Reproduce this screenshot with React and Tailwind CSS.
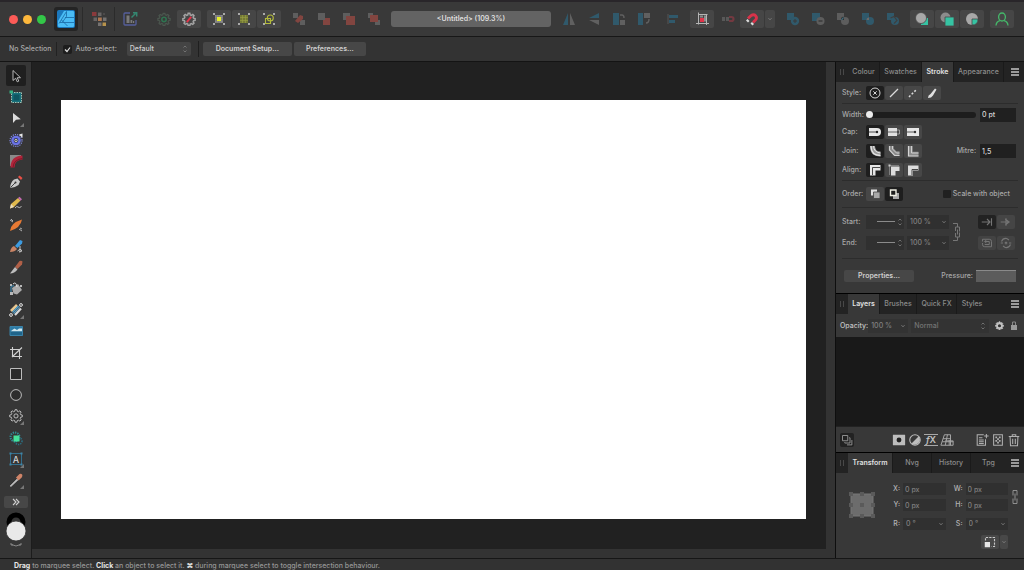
import React, { useState } from "react";

const Svg = ({ children, className = "size-4", box = "0 0 16 16" }) => (
  <svg viewBox={box} className={`shrink-0 ${className}`} fill="none" aria-hidden="true">
    {children}
  </svg>
);

const GEAR =
  "M7 1.5h2l.4 1.8 1.3.5 1.6-1 1.4 1.4-1 1.6.5 1.3 1.8.4v2l-1.8.4-.5 1.3 1 1.6-1.4 1.4-1.6-1-1.3.5L9 15.5H7l-.4-1.8-1.3-.5-1.6 1-1.4-1.4 1-1.6-.5-1.3L1 9.5v-2l1.8-.4.5-1.3-1-1.6 1.4-1.4 1.6 1 1.3-.5z";

const Corners = () => (
  <path d="M2 2h2v2H2zM12 2h2v2h-2zM2 12h2v2H2zM12 12h2v2h-2z" fill="#aaa" />
);

const Dots = ({ fill }) => (
  <g fill={fill}>
    {[4.2, 6.2, 8.2, 10.2].map((y) =>
      [4.2, 6.2, 8.2, 10.2].map((x) => <rect key={`${x}-${y}`} x={x} y={y} width="1.5" height="1.5" />)
    )}
  </g>
);

/* ---------- toolbar icons ---------- */

const DesignerLogo = () => (
  <Svg className="size-[18px]" box="0 0 18 18">
    <rect width="18" height="18" rx="2" fill="#1b78bd" />
    <path d="M7 1h9q1 0 1 1v14q0 1-1 1H2q-1 0-1-1v-5z" fill="#4abcf5" />
    <path d="M9.500 1.500L2 13.500M9.500 1.500v5L5.500 12M4.500 10l6 6M3 12.500h14M8 7.500h9" stroke="#1867a3" strokeWidth=".8" />
  </Svg>
);

const PixelPersona = () => (
  <Svg>
    <path d="M1 1h4.500v4H1z" fill="#8a3a3c" />
    <path d="M7 1.500h3.500V5H7z" fill="#686565" />
    <path d="M2.500 6.500H6V10H2.500z" fill="#686565" />
    <path d="M7 6.500h3.800V10H7z" fill="#ad7650" />
    <path d="M12 6.500h3.500V10H12z" fill="#757271" />
    <path d="M7 11.500h3.500V15H7z" fill="#757271" />
    <path d="M11.500 11.500h3.500V15h-3.500z" fill="#b8934c" />
    <path d="M12 2h2v2h-2z" fill="#4c4a4a" />
  </Svg>
);

const ExportPersona = () => (
  <Svg>
    <path d="M8 2H3q-1 0-1 1v10q0 1 1 1h10q1 0 1-1V9" stroke="#555f9c" strokeWidth="1.300" />
    <path d="M4.500 4.500h3v7.500h-3zM8.500 9h1.800v3H8.500zM11 10h1.200v2H11z" fill="#7a7a7a" />
    <path d="M9.500 6.500l4-4M11 1.800h3.700v3.700" stroke="#348670" strokeWidth="1.500" />
  </Svg>
);

const GearGreen = () => (
  <Svg className="size-3.5">
    <path d={GEAR} stroke="#4b564e" strokeWidth="1.400" />
    <circle cx="8" cy="8.500" r="2.500" stroke="#2f7350" strokeWidth="1.800" />
  </Svg>
);

const GearRed = () => (
  <Svg className="size-3.5">
    <path d={GEAR} stroke="#a3a3a3" strokeWidth="1.700" />
    <path d="M5.500 11.500l5-6" stroke="#e2344a" strokeWidth="2.200" />
  </Svg>
);

const SnapGrid = () => (
  <Svg>
    <Corners />
    <Dots fill="#b3b3b3" />
    <path d="M6 6h4v4H6z" fill="#e6f02a" />
  </Svg>
);

const SnapGridDim = () => (
  <Svg>
    <Corners />
    <path d="M4 4h8v8H4z" fill="#747a35" />
    <path d="M4 6.500h8M4 9.500h8M6.500 4v8M9.500 4v8" stroke="#9ba145" strokeWidth=".6" />
  </Svg>
);

const SnapShapes = () => (
  <Svg>
    <Corners />
    <path d="M4.500 7.500h5v5h-5z" stroke="#b3ba3b" strokeWidth="1.100" />
    <circle cx="9.300" cy="7" r="3" stroke="#b3ba3b" strokeWidth="1.100" />
  </Svg>
);

const Order = ({ kind }) => (
  <Svg>
    {kind === 0 && (
      <>
        <path d="M2 2h5v5H2zM9 9h5v5H9z" fill="#5e5e5e" />
        <path d="M4 10l5-6 3 1v3l-5 4z" fill="#824540" />
      </>
    )}
    {kind === 1 && (
      <>
        <path d="M7 7h7v7H7z" fill="#824540" />
        <path d="M2 2h7v7H2z" fill="#5e5e5e" />
      </>
    )}
    {kind === 2 && (
      <>
        <path d="M2 2h7v7H2z" fill="#5e5e5e" />
        <path d="M5 5h9v9H5z" fill="#824540" />
      </>
    )}
    {kind === 3 && (
      <>
        <path d="M2 2h5v5H2zM9 9h5v5H9z" fill="#5e5e5e" />
        <path d="M4 4h8v7H4z" fill="#824540" />
      </>
    )}
  </Svg>
);

const Flip = ({ kind }) => (
  <Svg>
    {kind === 0 && (
      <>
        <path d="M7 2v12H2z" fill="#30596b" />
        <path d="M9 2v12h5z" fill="#606060" />
      </>
    )}
    {kind === 1 && (
      <>
        <path d="M13 2v5H3z" fill="#30596b" />
        <path d="M13 14V9H3z" fill="#606060" />
      </>
    )}
    {kind === 2 && (
      <>
        <path d="M2 2h6v12H2z" fill="#30596b" />
        <path d="M9 9h5v5H9z" fill="#606060" />
        <path d="M9 4h2q2 0 2 3" stroke="#606060" strokeWidth="1.400" />
      </>
    )}
    {kind === 3 && (
      <>
        <path d="M2 2h5v12H2z" fill="#30596b" />
        <path d="M8 2h6v5H8z" fill="#606060" />
        <path d="M13 8q0 4-3 4" stroke="#606060" strokeWidth="1.400" />
      </>
    )}
  </Svg>
);

const AlignLeft = () => (
  <Svg>
    <path d="M3 3v10" stroke="#565656" />
    <path d="M4 4h9v3H4zM4 9h6v3H4z" fill="#30596b" />
  </Svg>
);

const PixelAlign = () => (
  <Svg>
    <path d="M4.500 1.500v12M2 12.500h13M4.500 3.500h9M12.500 3v11" stroke="#b5b5b5" />
    <path d="M6 4.500h3v2H6zM10 4.500h2v6h-2z" fill="#8d8d8d" />
    <path d="M6 7h4v4H6z" fill="#e2344a" />
  </Svg>
);

const MovePixels = () => (
  <Svg>
    <path d="M2 6h3v4H2zM6 6h3v4H6z" fill="#585858" />
    <path d="M9 6h2.500q2 0 2 2t-2 2H9" stroke="#733940" strokeWidth="2.200" />
  </Svg>
);

const Magnet = () => (
  <Svg>
    <path d="M4 7.500L7 4.700q2.700-2 4.600 0t-.2 4.400L9 11.500" stroke="#d8334a" strokeWidth="2.800" />
    <path d="M2 9.500l1.500-1.500L5.500 10l-1.500 1.500zM6.500 12.500L8 11l2 2-1.500 1.500z" fill="#ddd" />
  </Svg>
);

const Boolean = ({ kind }) => (
  <Svg>
    {kind === 0 && (
      <>
        <path d="M2 2h7v7H2z" fill="#30596b" />
        <circle cx="10" cy="10" r="4.200" fill="#30596b" />
        <path d="M8 10h4M10 8v4" stroke="#3b3b3b" />
      </>
    )}
    {kind === 1 && (
      <>
        <path d="M2 2h8v8H2z" fill="#30596b" />
        <circle cx="10.500" cy="10" r="4" fill="#5d5d5d" />
        <path d="M8.500 10h4" stroke="#333" strokeWidth="1.200" />
      </>
    )}
    {kind === 2 && (
      <>
        <path d="M2 2h7v7H2z" fill="#5d5d5d" />
        <circle cx="10" cy="10" r="4" fill="#5d5d5d" />
        <path d="M6 9q0-4 3-3v3z" fill="#303030" />
        <path d="M6.500 9l2-2.500" stroke="#40758a" strokeWidth="1.200" />
      </>
    )}
    {kind === 3 && (
      <>
        <path d="M2 2h7v7H2z" fill="#30596b" />
        <circle cx="10" cy="10" r="4" fill="#30596b" />
        <path d="M6.500 9q0-3 2.500-2.500V9z" fill="#6f6a68" />
      </>
    )}
    {kind === 4 && (
      <>
        <path d="M2 2h7v7H2z" fill="#30596b" />
        <circle cx="10" cy="10" r="4" fill="#30596b" />
        <path d="M5.500 7L9 5.500l3 4L9 12.500" stroke="#3f3f3f" strokeWidth="1.200" />
      </>
    )}
  </Svg>
);

const Insert = ({ kind }) => (
  <Svg>
    {kind === 0 && (
      <>
        <path d="M7 7h7v7H7z" fill="#36c3a3" />
        <circle cx="7" cy="7" r="5.500" fill="#a8a8a8" stroke="#484848" strokeWidth=".8" />
      </>
    )}
    {kind === 1 && (
      <>
        <circle cx="6.500" cy="6.500" r="5" fill="#8c8c8c" />
        <path d="M6 6h9v9H6z" fill="#36c3a3" stroke="#484848" strokeWidth=".8" />
      </>
    )}
    {kind === 2 && (
      <>
        <circle cx="8" cy="8" r="6" fill="#a8a8a8" />
        <path d="M8 8h6q0 6-6 6z" fill="#36c3a3" stroke="#484848" strokeWidth=".8" />
      </>
    )}
  </Svg>
);

const User = () => (
  <Svg>
    <ellipse cx="8" cy="6" rx="3.400" ry="4" stroke="#45b96a" strokeWidth="1.300" />
    <path d="M2 14.500q.4-4 4-4.800M14 14.500q-.4-4-4-4.800" stroke="#45b96a" strokeWidth="1.300" />
  </Svg>
);

/* ---------- tools ---------- */

const tools = [
  { name: "Move", draw: <path d="M5 2.500v10l2.700-2.300 1.500 3.600 1.600-.7-1.600-3.400H12.500z" fill="#111" stroke="#c8c8c8" strokeWidth=".9" /> },
  {
    name: "Artboard",
    draw: (
      <>
        <path d="M3.500 3.500h10v10h-10z" fill="#17717c" stroke="#a3c2b4" strokeWidth="1" strokeDasharray="1.500 1" />
        <path d="M5.500 5.500h6v6h-6z" fill="#0e5661" />
        <path d="M1.500 1.500H5v3H1.500z" fill="#36b082" />
      </>
    ),
  },
  { name: "Node", more: true, draw: <path d="M5 3v10l3-3.200 4.800-.6z" fill="#dcdcdc" /> },
  {
    name: "Contour",
    draw: (
      <>
        <circle cx="8" cy="8.500" r="6" stroke="#8088dc" strokeWidth="1.200" strokeDasharray="1.200 1" />
        <circle cx="8" cy="8.500" r="3.600" fill="#2f3568" stroke="#6a73e6" strokeWidth="2.400" />
        <circle cx="8" cy="8.500" r="1.200" stroke="#e0dca8" strokeWidth=".9" />
        <path d="M14.500 1.500v4.500l-3.500-3.500z" fill="#e8e8e8" />
      </>
    ),
  },
  {
    name: "Corner",
    draw: (
      <>
        <path d="M2 2h11v2Q4 4 4 13H2z" fill="#8a8a8a" />
        <path d="M4.500 14.500Q4.500 5 14.500 4.500" stroke="#b0243a" strokeWidth="4" />
        <path d="M5 14.500Q5.500 6.500 14.500 5.500" stroke="#6f1525" strokeWidth=".8" />
      </>
    ),
  },
  {
    name: "Pen",
    draw: (
      <>
        <path d="M2 14q.5-6 4-8.500l3.500-1 2.500 3-1.500 3.500Q7.500 13.500 2 14z" fill="#c9c9c9" />
        <path d="M2.500 13.500L7 9" stroke="#333" strokeWidth=".9" />
        <circle cx="7.500" cy="8.500" r="1" fill="#333" />
        <path d="M10 3l1.500-1.500 3 2.500-1.500 2z" fill="#ea4f45" />
      </>
    ),
  },
  {
    name: "Pencil",
    draw: (
      <>
        <path d="M3 9l7-6 2.500 2.500-6.500 6.500L2 13.500z" fill="#dfb94d" />
        <path d="M3 9l3 3-4 1.500z" fill="#e9dcc0" />
        <path d="M10 3l1.500-1.300 2.500 2.500-1.500 1.500z" fill="#c36bb0" />
        <path d="M7 13q2-2.500 3-1t3.500-.5" stroke="#c9c9c9" strokeWidth=".9" />
      </>
    ),
  },
  {
    name: "Vector Brush",
    draw: (
      <>
        <path d="M2 3l3 2M3 2l2 2M11 12l3 2M12 11l2 1" stroke="#bdbdbd" strokeWidth=".9" />
        <path d="M2 14Q2.500 6 14 2.500 12.500 11 2 14z" fill="#e77a34" />
      </>
    ),
  },
  {
    name: "Paint Brush",
    draw: (
      <>
        <path d="M7 8l5-6 2.500 1-.5 2.500L9.500 10z" fill="#3c9be0" />
        <path d="M2 14q1-5 4-6l3 3q-2 3-7 3z" fill="#c98465" />
        <path d="M12 8v6M9.500 13q3-3 4-1t-2.500 2" stroke="#c4c4c4" strokeWidth="1" />
      </>
    ),
  },
  {
    name: "Knife",
    draw: (
      <>
        <path d="M7 8l4.500-6q2-.8 3 .5l-.5 3L9.500 10z" fill="#b06048" />
        <path d="M2 14.500L7 8l2.500 2.500q-3 4-7.500 4z" fill="#bdbdbd" />
      </>
    ),
  },
  {
    name: "Fill",
    draw: (
      <>
        <path d="M4 7l6-4 4 6-5 4.500-3.500-1z" fill="#ababab" />
        <path d="M5 3q3-3 4 3" stroke="#e0e0e0" />
        <path d="M3 12V6.500q0-2 3-1.500" stroke="#3c7fa3" strokeWidth="1.300" />
        <path d="M2 3h2v2H2zM2 11h3v3H2zM12 4h2v2h-2z" fill="#b8b8b8" />
      </>
    ),
  },
  {
    name: "Stock",
    more: true,
    draw: (
      <>
        <path d="M3 9l6-6" stroke="#e8c68f" strokeWidth="2.600" />
        <path d="M5 11l6-6.500" stroke="#4c9fce" strokeWidth="2.600" />
        <path d="M7 13l6-6.500" stroke="#d9d9d9" strokeWidth="2.200" />
        <path d="M2 14L14 2" stroke="#555" strokeWidth=".8" />
        <circle cx="3" cy="13" r="1.400" stroke="#ddd" />
        <circle cx="13" cy="3" r="1.400" stroke="#ddd" />
      </>
    ),
  },
  {
    name: "Place Image",
    draw: (
      <>
        <path d="M2 3.500h12.500v9H2z" fill="#2d7ba6" />
        <path d="M3 8l2-1.500 1.500-1L9 7l2-1.500h3v3H3z" fill="#cfe6ee" />
        <path d="M2 8.500h12.500v4H2z" fill="#1f648a" />
        <path d="M2 3.500h12.500v9H2z" stroke="#3b83a8" />
      </>
    ),
  },
  {
    name: "Vector Crop",
    draw: <path d="M4.500 2v9.500H14M2 4.500h9.500V14M4 12L14 2.500" stroke="#d0d0d0" strokeWidth="1.100" />,
  },
  { name: "Rectangle", draw: <path d="M2.500 2.500h11v11h-11z" fill="#2a2a2a" stroke="#bcbcbc" /> },
  { name: "Ellipse", draw: <circle cx="8" cy="8" r="5.400" fill="#2d2d2d" stroke="#bcbcbc" /> },
  {
    name: "Cog",
    more: true,
    draw: (
      <g transform="translate(.8 .3) scale(.9)">
        <path d={GEAR} stroke="#bcbcbc" strokeWidth="1.100" />
        <circle cx="8" cy="8.500" r="2.300" stroke="#bcbcbc" strokeWidth="1.100" />
      </g>
    ),
  },
  {
    name: "Shape Builder",
    draw: (
      <>
        <circle cx="7" cy="7" r="4.500" stroke="#2f8d94" strokeWidth="2" strokeDasharray="1.300 1" />
        <circle cx="10.500" cy="11" r="3.500" stroke="#2b6d80" strokeWidth="1.600" strokeDasharray="1.300 1" />
        <path d="M5.500 5.500h6v6h-6z" fill="#45e39b" />
      </>
    ),
  },
  {
    name: "Frame Text",
    more: true,
    draw: (
      <>
        <path d="M2.500 2.500h11v11h-11z" stroke="#356f8c" strokeWidth="1" />
        <path d="M1.500 1.500h2v2h-2zM12.500 1.500h2v2h-2zM1.500 12.500h2v2h-2zM12.500 12.500h2v2h-2z" fill="#3f86a8" />
        <text x="8" y="11.500" fontSize="9" textAnchor="middle" fill="#d4d4d4">A</text>
      </>
    ),
  },
  {
    name: "Colour Picker",
    more: true,
    draw: (
      <>
        <path d="M2 14l7-7 1 1-7 6.500z" fill="#bfbfbf" stroke="#bfbfbf" strokeWidth=".6" />
        <path d="M8 5.500l3.500-3.500q2-.5 2.700.7t-.7 3L10.500 8.500z" fill="#cf8468" />
      </>
    ),
  },
];

/* ---------- shared controls ---------- */

const ToolButton = ({ label, children, className = "" }) => (
  <button type="button" aria-label={label} className={`flex h-[18px] shrink-0 items-center justify-center ${className}`}>
    {children}
  </button>
);

const Stepper = () => (
  <Svg className="h-2.5 w-2" box="0 0 8 10">
    <path d="M2.500 3.500L4 2l1.500 1.500M2.500 6.500L4 8l1.500-1.500" stroke="#777" strokeWidth=".9" />
  </Svg>
);

const Chevron = () => (
  <Svg className="size-1.5" box="0 0 6 6">
    <path d="M1.500 2.200L3 3.800l1.500-1.600" stroke="#808080" strokeWidth=".9" />
  </Svg>
);

const Select = ({ label, value, className = "", icon = <Stepper /> }) => (
  <span className={`relative flex items-center ${className}`}>
    <select
      aria-label={label}
      className="h-full w-full appearance-none bg-transparent pl-[3px] font-medium outline-none"
      defaultValue={value}
    >
      <option>{value}</option>
    </select>
    <span className="pointer-events-none absolute right-0.5 flex">{icon}</span>
  </span>
);

const PushButton = ({ children, className = "" }) => (
  <button type="button" className={`rounded-[2px] bg-[#474747] text-center font-semibold text-[#cfcfcf] ${className}`}>
    {children}
  </button>
);

const Tabs = ({ tabs, active, onChange }) => (
  <div role="tablist" className="flex h-5 shrink-0 items-stretch bg-[#232323] text-[#8c8c8c]">
    <span className="flex w-3 shrink-0 items-center justify-center gap-0.5">
      <i className="h-1.5 w-px bg-[#484848]" />
      <i className="h-1.5 w-px bg-[#484848]" />
    </span>
    {tabs.map((tab) => (
      <button
        key={tab.name}
        type="button"
        role="tab"
        aria-selected={tab.name === active}
        onClick={() => onChange(tab.name)}
        className={`shrink-0 border-r border-[#1a1a1a] ${tab.width} ${
          tab.name === active ? "bg-[#383838] font-semibold text-[#e0e0e0]" : "font-medium"
        }`}
      >
        {tab.name}
      </button>
    ))}
    <button type="button" aria-label="Panel menu" className="ml-auto flex w-[18px] items-center justify-center">
      <Svg className="size-2.5" box="0 0 10 10">
        <path d="M1 2h8M1 5h8M1 8h8" stroke="#c4c4c4" strokeWidth="1.300" />
      </Svg>
    </button>
  </div>
);

const Segments = ({ items, selected, label }) => {
  const [current, setCurrent] = useState(selected);
  return (
    <div className="flex gap-px" role="group" aria-label={label}>
      {items.map((item, i) => (
        <button
          key={i}
          type="button"
          aria-label={`${label} ${i + 1}`}
          aria-pressed={i === current}
          onClick={() => setCurrent(i)}
          className={`flex h-3.5 w-[18px] items-center justify-center rounded-[2px] ${
            i === current ? "bg-[#1e1e1e]" : "bg-[#474747]"
          }`}
        >
          <Svg className="h-3 w-4" box="0 0 16 12">{item}</Svg>
        </button>
      ))}
    </div>
  );
};

const styleIcons = [
  <g stroke="#d6d6d6" key="none"><circle cx="8" cy="6" r="5" /><path d="M6.300 4.300l3.400 3.400M9.700 4.300L6.300 7.700" /></g>,
  <path key="line" d="M4 10l8-8" stroke="#dcdcdc" strokeWidth="1.300" />,
  <path key="dash" d="M4 10l8-8" stroke="#dcdcdc" strokeWidth="1.500" strokeDasharray="2 1.800" />,
  <path key="brush" d="M4 11q0-3 2.500-4L11 1.500l1.500 1L9 8.500Q7.500 11 4 11z" fill="#e0e0e0" />,
];

const capIcons = [
  <g key="round"><path d="M2 2h8q4 0 4 4t-4 4H2z" fill="#e6e6e6" /><path d="M2 6h8" stroke="#222" strokeWidth=".8" /><circle cx="10" cy="6" r="1.200" fill="#222" /></g>,
  <g key="butt"><path d="M2 2h9v8H2z" fill="#e0e0e0" /><path d="M2 6h9" stroke="#444" strokeWidth=".8" /><path d="M11 4h2.500v4H11" stroke="#b0b0b0" strokeWidth=".8" /></g>,
  <g key="square"><path d="M2 2h12v8H2z" fill="#e6e6e6" /><path d="M2 6h8" stroke="#333" strokeWidth=".8" /><circle cx="10" cy="6" r="1.200" fill="#333" /></g>,
];

const joinIcons = [
  <g key="round"><path d="M5.500 1q0 8 8 8" stroke="#9c9c9c" strokeWidth="5" /><path d="M4 1q0 9.500 9.500 9.500" stroke="#e4e4e4" strokeWidth="1.300" /><path d="M6.500 1q.5 6.500 7 7" stroke="#e4e4e4" /></g>,
  <g key="bevel"><path d="M5.500 1v3.500l4 4h4" stroke="#8a8a8a" strokeWidth="4.500" /><path d="M3.500 1v4l5 5.500h5" stroke="#cfcfcf" strokeWidth="1.200" /><path d="M6.500 1v3l4 4h3" stroke="#cfcfcf" /></g>,
  <g key="mitre"><path d="M5.500 1v8h8" stroke="#8a8a8a" strokeWidth="4.500" /><path d="M3.500 1v10h10" stroke="#d6d6d6" strokeWidth="1.200" /><path d="M6.500 1v7h7" stroke="#cfcfcf" /></g>,
];

const alignIcons = [
  <g key="centre"><path d="M3 1h10.500v5.500H8.500v5H3z" fill="#e6e6e6" /><path d="M5.500 11V3.500H13" stroke="#222" strokeWidth=".8" /></g>,
  <g key="inside"><path d="M5 2.500h8.500v4.500H9.500v4.500H5z" fill="#dcdcdc" /><path d="M3.500 11V1.500H13" stroke="#8a8a8a" strokeWidth=".8" /><path d="M2.500.500h2v2h-2z" fill="#ccc" /></g>,
  <g key="outside"><path d="M3 1.500h10.500v5H8v5H3z" fill="#dcdcdc" /><path d="M7 11V5.500h6" stroke="#333" strokeWidth=".9" /></g>,
];

const orderIcons = [
  <g key="behind"><path d="M4 1.500h6v6H4z" fill="#e0e0e0" /><path d="M6.500 4h6.500v6.500H6.500z" fill="#a8a8a8" stroke="#444" strokeWidth=".8" /></g>,
  <g key="front"><path d="M7 5h6v6H7z" fill="#a8a8a8" /><path d="M4.500 2h5.500v5.500H4.500z" fill="#1e1e1e" stroke="#f0f0e4" strokeWidth="1.400" /></g>,
];

/* ---------- panels ---------- */

const Divider = () => <hr className="mx-1.5 border-[#2c2c2c]" />;

const ArrowEnd = ({ label }) => (
  <div className="flex h-[21px] items-center">
    <span className="w-6 text-[#a8a8a8]">{label}:</span>
    <button type="button" aria-label={`${label} arrowhead`} className="flex h-3.5 w-[38px] items-center justify-end gap-px bg-[#303030]">
      <span className="h-px w-[18px] bg-[#8a8a8a]" />
      <Stepper />
    </button>
    <Select label={`${label} scale`} value="100 %" icon={<Chevron />} className="ml-[3px] h-3.5 w-[42px] bg-[#303030] text-[#808080]" />
  </div>
);

const StrokePanel = () => {
  const [tab, setTab] = useState("Stroke");
  return (
    <section className="border-b border-black">
      <Tabs
        active={tab}
        onChange={setTab}
        tabs={[
          { name: "Colour", width: "w-8" },
          { name: "Swatches", width: "w-[42px]" },
          { name: "Stroke", width: "w-8" },
          { name: "Appearance", width: "w-[50px]" },
        ]}
      />
      <div className="flex h-[21px] items-center pl-1.5">
        <span className="w-6">Style:</span>
        <Segments label="Style" items={styleIcons} selected={0} />
      </div>
      <Divider />
      <div className="flex h-[21px] items-center pr-2 pl-1.5">
        <label htmlFor="width" className="w-6">Width:</label>
        <input
          id="width"
          type="range"
          min="0"
          max="100"
          defaultValue="0"
          className="h-1.5 min-w-0 flex-1 appearance-none rounded-full bg-[#1d1d1d] [&::-webkit-slider-thumb]:size-[7px] [&::-webkit-slider-thumb]:appearance-none [&::-webkit-slider-thumb]:rounded-full [&::-webkit-slider-thumb]:bg-[#ececec]"
        />
        <input aria-label="Width value" defaultValue="0 pt" className="ml-1 h-3.5 w-9 bg-[#202020] px-0.5 font-medium text-[#d8d8d8] outline-none" />
      </div>
      <div className="flex flex-col gap-[5px] px-1.5 pb-[3px]">
        <div className="flex items-center">
          <span className="w-6">Cap:</span>
          <Segments label="Cap" items={capIcons} selected={0} />
        </div>
        <div className="flex items-center">
          <span className="w-6">Join:</span>
          <Segments label="Join" items={joinIcons} selected={0} />
          <label htmlFor="mitre" className="ml-auto">Mitre:</label>
          <input id="mitre" defaultValue="1,5" className="mr-0.5 ml-1 h-3.5 w-9 bg-[#202020] px-0.5 font-medium text-[#d8d8d8] outline-none" />
        </div>
        <div className="flex items-center">
          <span className="w-6">Align:</span>
          <Segments label="Align" items={alignIcons} selected={0} />
        </div>
      </div>
      <Divider />
      <div className="flex h-[26px] items-center pr-3.5 pl-1.5">
        <span className="w-6">Order:</span>
        <Segments label="Order" items={orderIcons} selected={1} />
        <label className="ml-auto flex items-center gap-0.5">
          <input type="checkbox" className="size-2 appearance-none rounded-[1px] bg-[#202020]" />
          Scale with object
        </label>
      </div>
      <Divider />
      <div className="flex items-center pt-[3px] pr-[9px] pb-[5px] pl-1.5">
        <div>
          <ArrowEnd label="Start" />
          <ArrowEnd label="End" />
        </div>
        <Svg className="ml-1 h-5 w-2" box="0 0 8 20">
          <path d="M0 1.500h4.500V5M0 18.500h4.500V15M2.500 9V5h4v4.500M2.500 11v4h4v-4.500M4.500 7.500v5" stroke="#767676" />
        </Svg>
        <div className="ml-auto grid grid-cols-2 gap-x-px gap-y-[7px] text-[#757575]">
          <ToolButton label="Place arrow within line" className="h-3.5! w-[18px] rounded-[2px] bg-[#222]">
            <Svg className="size-3"><path d="M1 8h10M8 4l4 4-4 4M14 3v10" stroke="currentColor" strokeWidth="1.500" /></Svg>
          </ToolButton>
          <ToolButton label="Place arrow at end" className="h-3.5! w-[18px] rounded-[2px] bg-[#454545]">
            <Svg className="size-3"><path d="M1 8h12M7 4l5 4-5 4M8 3v10" stroke="currentColor" strokeWidth="1.500" /></Svg>
          </ToolButton>
          <ToolButton label="Swap arrows" className="h-3.5! w-[18px] rounded-[2px] bg-[#434343]">
            <Svg className="size-3"><path d="M2 3h9q3 0 3 3v7H5q-3 0-3-3V8M5 6h6v4H5M7 4L5 6l2 2M2 3v3" stroke="currentColor" strokeWidth="1.300" /></Svg>
          </ToolButton>
          <ToolButton label="Link arrows" className="h-3.5! w-[18px] rounded-[2px] bg-[#434343]">
            <Svg className="size-3"><path d="M2 6q2-5 7-4l3 2M14 10q-2 5-7 4l-3-2M1 8h3M12 8h3M6.500 6.500l3 3M9.500 6.500l-3 3" stroke="currentColor" strokeWidth="1.500" /></Svg>
          </ToolButton>
        </div>
      </div>
      <Divider />
      <div className="flex h-[34px] items-center pr-2 pl-2">
        <PushButton className="h-3 w-[70px]">Properties...</PushButton>
        <span className="ml-auto">Pressure:</span>
        <button type="button" aria-label="Pressure profile" className="ml-[3px] h-3 w-10 border-t border-[#8a8a8a] bg-[#5c5c5c]" />
      </div>
    </section>
  );
};

const LayersPanel = () => {
  const [tab, setTab] = useState("Layers");
  return (
    <section className="flex min-h-0 flex-1 flex-col border-b border-black">
      <Tabs
        active={tab}
        onChange={setTab}
        tabs={[
          { name: "Layers", width: "w-8" },
          { name: "Brushes", width: "w-[37px]" },
          { name: "Quick FX", width: "w-10" },
          { name: "Styles", width: "w-[30px] border-r-0" },
        ]}
      />
      <div className="flex h-[23px] shrink-0 items-center pr-1.5 pl-1">
        <span className="text-[#c4c4c4]">Opacity:</span>
        <Select label="Opacity" value="100 %" icon={<Chevron />} className="h-3.5 w-10 bg-[#333] text-[#808080]" />
        <Select label="Blend mode" value="Normal" className="ml-[3px] h-3.5 flex-1 bg-[#333] text-[#747474]" />
        <button type="button" aria-label="Blend ranges" className="ml-1.5">
          <Svg className="size-[9px]"><path d={GEAR} fill="#c4c4c4" stroke="#c4c4c4" strokeWidth="1.500" /><circle cx="8" cy="8.500" r="2.800" fill="#333" /></Svg>
        </button>
        <button type="button" aria-label="Lock" className="ml-1.5">
          <Svg className="h-[9px] w-2" box="0 0 8 9"><path d="M1 4h6v5H1z" fill="#999" /><path d="M2.500 4V1h3v3" stroke="#888" /></Svg>
        </button>
      </div>
      <div className="flex-1 bg-[#191919]" />
      <div className="flex h-[26px] shrink-0 items-center border-t border-[#222] pr-[3px] pl-1">
        <ToolButton label="Edit all layers" className="h-3.5! w-3.5 rounded-[2px] bg-[#222]">
          <Svg className="size-3"><path d="M2 2h7v7H2zM5 11V12h7V5h-1M8 14.500h6.500V8" stroke="#999" strokeWidth="1.200" /></Svg>
        </ToolButton>
        <div className="ml-auto flex gap-0.5">
          <ToolButton label="Mask layer"><Svg className="size-3.5"><path d="M1 2h14v12H1z" fill="#bdbdbd" /><circle cx="8" cy="8" r="2.800" fill="#222" /></Svg></ToolButton>
          <ToolButton label="Adjustments"><Svg className="size-3.5"><circle cx="8" cy="8" r="6" stroke="#bdbdbd" strokeWidth="1.200" /><path d="M12 4q3.500 4 0 7.500T4 12z" fill="#bdbdbd" /></Svg></ToolButton>
          <ToolButton label="Layer effects">
            <span className="w-3.5 border-y border-[#a8a8a8] text-[9px] leading-[10px] font-semibold text-[#c0c0c0]"><i>f</i>X</span>
          </ToolButton>
          <ToolButton label="Live filters"><Svg className="size-3.5"><path d="M5 2h7v12M5 2L1 14h14V9h-9M3.500 6.500H12M2.500 10H15M8.500 2L6 14M10.500 8v6" stroke="#a8a8a8" strokeWidth="1.100" /></Svg></ToolButton>
        </div>
        <div className="ml-[21px] flex gap-0.5">
          <ToolButton label="Add layer"><Svg className="size-3.5"><path d="M10 2H2.500v12H12V7M4.500 5.500h4M4.500 8h5.500M4.500 10h5.500M4.500 12h5.500M13 1v5M10.500 3.500h5" stroke="#b0b0b0" strokeWidth="1.200" /></Svg></ToolButton>
          <ToolButton label="Add pixel layer"><Svg className="size-3.5"><path d="M3 2h10v12H3z" stroke="#b0b0b0" strokeWidth="1.200" /><path d="M5 4h2v2H5zM9 4h2v2H9zM7 6h2v2H7zM5 8h2v2H5zM9 8h2v2H9zM7 10h2v2H7z" fill="#b0b0b0" /></Svg></ToolButton>
          <ToolButton label="Delete"><Svg className="size-3.5"><path d="M2 4h12M6 4V2h4v2M3.500 4l.5 10.500h8l.5-10.500M6.500 6.500v6M9.500 6.500v6" stroke="#b0b0b0" strokeWidth="1.200" /></Svg></ToolButton>
        </div>
      </div>
    </section>
  );
};

const Field = ({ id, label, value }) => (
  <div className="flex items-center">
    <label htmlFor={id} className="w-3 pr-[3px] text-right text-[#b4b4b4]">{label}:</label>
    <input id={id} defaultValue={value} className="h-3 min-w-0 flex-1 bg-[#303030] pl-0.5 font-medium text-[#808080] outline-none" />
  </div>
);

const AngleField = ({ label, value }) => (
  <div className="mt-[3px] flex items-center">
    <span className="w-3 pr-[3px] text-right text-[#b4b4b4]">{label}:</span>
    <Select label={label} value={value} icon={<Chevron />} className="h-3 flex-1 bg-[#303030] text-[#808080]" />
  </div>
);

const TransformPanel = () => {
  const [tab, setTab] = useState("Transform");
  return (
    <section className="shrink-0">
      <Tabs
        active={tab}
        onChange={setTab}
        tabs={[
          { name: "Transform", width: "w-[45px]" },
          { name: "Nvg", width: "w-[39px]" },
          { name: "History", width: "w-[39px]" },
          { name: "Tpg", width: "w-[35px] border-r-0" },
        ]}
      />
      <div className="flex h-[85px] items-start pt-2.5 pr-[5px]">
        <Svg className="mt-2 ml-3 size-7" box="0 0 28 28">
          <path d="M3 3h22v22H3z" fill="#6c6c6c" stroke="#777" />
          <path d="M1 1h4v4H1zM12 1h4v4h-4zM23 1h4v4h-4zM1 12h4v4H1zM12 12h4v4h-4zM23 12h4v4h-4zM1 23h4v4H1zM12 23h4v4h-4zM23 23h4v4h-4z" fill="#5a5a5a" />
        </Svg>
        <div className="ml-[15px] flex-1">
          <div className="grid grid-cols-2 gap-x-2 gap-y-1">
            <Field id="x" label="X" value="0 px" />
            <Field id="w" label="W" value="0 px" />
            <Field id="y" label="Y" value="0 px" />
            <Field id="h" label="H" value="0 px" />
            <AngleField label="R" value="0 °" />
            <AngleField label="S" value="0 °" />
          </div>
          <div className="mt-[5px] flex justify-end gap-px">
            <ToolButton label="Transform mode" className="h-3.5! w-[18px] rounded-[2px] bg-[#484848]">
              <Svg className="size-3"><path d="M2 6V2h12v12h-4" stroke="#c8c8c8" strokeWidth="1.500" strokeDasharray="3 1.500" /><path d="M1 8h7v7H1z" fill="#e6e6e6" /></Svg>
            </ToolButton>
            <ToolButton label="More" className="h-3.5! w-2 rounded-[2px] bg-[#484848]">
              <Chevron />
            </ToolButton>
          </div>
        </div>
        <Svg className="mt-1.5 ml-[3px] h-4 w-2" box="0 0 8 16">
          <path d="M2 6.500V1.500h4v5M2 9.500v5h4v-5M4 4.500v7" stroke="#999" strokeWidth=".9" />
        </Svg>
      </div>
    </section>
  );
};

const BTN = "w-6 rounded-[2px] bg-[#464646]";

export default function App() {
  const [tool, setTool] = useState("Move");

  return (
    <div className="flex h-screen flex-col overflow-hidden bg-[#363636] font-['Inter',sans-serif] text-[7px] leading-[10px] font-medium text-[#a8a8a8]">
      {/* Toolbar */}
      <header className="flex h-[37px] shrink-0 items-center border-t-2 border-b border-t-[#29262a] border-b-[#171717] bg-[#393939] pr-2.5 pl-[9px]">
        <div className="flex shrink-0 gap-[5px]">
          <button type="button" aria-label="Close" className="size-[9px] rounded-full bg-[#fc5b57]" />
          <button type="button" aria-label="Minimise" className="size-[9px] rounded-full bg-[#fdb83c]" />
          <button type="button" aria-label="Zoom" className="size-[9px] rounded-full bg-[#33c748]" />
        </div>
        <ToolButton label="Designer" className="ml-2 h-6! w-6 rounded-[3px] bg-[#242424]"><DesignerLogo /></ToolButton>
        <span className="ml-1 h-6 w-px bg-[#2b2b2b]" />
        <ToolButton label="Pixel" className="w-[31px]"><PixelPersona /></ToolButton>
        <span className="h-6 w-px bg-[#2b2b2b]" />
        <ToolButton label="Export" className="mr-1.5 w-[30px]"><ExportPersona /></ToolButton>
        <ToolButton label="Defaults" className="w-[26px]"><GearGreen /></ToolButton>
        <ToolButton label="Revert defaults" className={BTN}><GearRed /></ToolButton>
        <div className="ml-1.5 flex gap-px">
          <ToolButton label="Show grid" className={BTN}><SnapGrid /></ToolButton>
          <ToolButton label="Snap to grid" className={BTN}><SnapGridDim /></ToolButton>
          <ToolButton label="Snap to shapes" className={BTN}><SnapShapes /></ToolButton>
        </div>
        <div className="ml-[5px] flex">
          {["Move to back", "Back one", "Forward one", "Move to front"].map((name, i) => (
            <ToolButton key={name} label={name} className="w-[25px]"><Order kind={i} /></ToolButton>
          ))}
        </div>
        <h1 className="mx-[5px] h-4 flex-1 rounded-[3px] bg-[#636363] text-center leading-4 font-semibold text-[#dedede]">
          &lt;Untitled&gt; (109.3%)
        </h1>
        <div className="flex">
          {["Flip horizontal", "Flip vertical", "Rotate left", "Rotate right"].map((name, i) => (
            <ToolButton key={name} label={name} className="w-[25px]"><Flip kind={i} /></ToolButton>
          ))}
        </div>
        <ToolButton label="Alignment" className="ml-[5px] w-6"><AlignLeft /></ToolButton>
        <ToolButton label="Force pixel alignment" className={`ml-[5px] ${BTN}`}><PixelAlign /></ToolButton>
        <ToolButton label="Move by whole pixels" className="ml-0.5 w-6"><MovePixels /></ToolButton>
        <ToolButton label="Snapping" className={BTN}><Magnet /></ToolButton>
        <ToolButton label="Snapping options" className="ml-px w-2.5 rounded-[2px] bg-[#464646]"><Chevron /></ToolButton>
        <div className="ml-[5px] flex">
          {["Add", "Subtract", "Intersect", "Xor", "Divide"].map((name, i) => (
            <ToolButton key={name} label={name} className="w-[25px]"><Boolean kind={i} /></ToolButton>
          ))}
        </div>
        <div className="ml-[5px] flex gap-px">
          {["Insert behind", "Insert on top", "Insert inside"].map((name, i) => (
            <ToolButton key={name} label={name} className={BTN}><Insert kind={i} /></ToolButton>
          ))}
        </div>
        <ToolButton label="Account" className={`ml-1.5 ${BTN}`}><User /></ToolButton>
      </header>

      {/* Context bar */}
      <div className="flex h-[25px] shrink-0 items-center border-b border-[#141414] bg-[#333] pl-[9px]">
        <span>No Selection</span>
        <span className="ml-1 h-3.5 w-px bg-[#222]" />
        <label className="ml-1.5 flex items-center gap-1">
          <span className="relative flex">
            <input type="checkbox" defaultChecked className="peer size-[9px] appearance-none rounded-[2px] bg-[#1d1d1d]" />
            <Svg className="pointer-events-none absolute size-[9px] opacity-0 peer-checked:opacity-100" box="0 0 9 9">
              <path d="M2 4.500l2 2 3-4" stroke="#e0e0e0" strokeWidth="1.200" />
            </Svg>
          </span>
          Auto-select:
        </label>
        <Select label="Auto-select" value="Default" className="ml-2.5 h-3.5 w-16 rounded-[2px] bg-[#444] text-[#cfcfcf]" />
        <span className="ml-[7px] mr-1 h-4 w-px bg-[#1f1f1f]" />
        <PushButton className="h-3.5 w-[89px]">Document Setup...</PushButton>
        <PushButton className="ml-0.5 h-3.5 w-[72px]">Preferences...</PushButton>
      </div>

      <div className="flex min-h-0 flex-1">
        {/* Tools */}
        <aside className="flex w-8 shrink-0 flex-col items-center border-r border-[#1c1c1c] bg-[#363636] pt-[3px] pb-2.5">
          <div className="flex w-full flex-1 flex-col items-center">
            {tools.map((t) => (
              <button
                key={t.name}
                type="button"
                aria-label={t.name}
                onClick={() => setTool(t.name)}
                className={`relative flex w-5 flex-1 items-center justify-center rounded-[2px] ${tool === t.name ? "bg-[#1f1f1f]" : ""}`}
              >
                <Svg>{t.draw}</Svg>
                {t.more && <span className="absolute right-0.5 bottom-0.5 border-b-4 border-l-4 border-b-[#777] border-l-transparent" />}
              </button>
            ))}
          </div>
          <button type="button" aria-label="More tools" className="mt-[5px] flex h-3 w-6 items-center justify-center rounded-[2px] bg-[#474747]">
            <Svg className="size-2" box="0 0 8 8"><path d="M1 1l3 3-3 3M4 1l3 3-3 3" stroke="#d0d0d0" strokeWidth="1.100" /></Svg>
          </button>
          <button type="button" aria-label="Stroke and fill" className="mt-1">
            <Svg className="h-9 w-6" box="0 0 24 36">
              <circle cx="12" cy="10" r="7" fill="#363636" stroke="#000" strokeWidth="5" />
              <circle cx="12" cy="19" r="10" fill="#e9e9e9" stroke="#333" strokeWidth=".8" />
              <path d="M7.500 32.500q4.500 3 9 0M7 31v2h2M17 31v2h-2" stroke="#888" />
            </Svg>
          </button>
        </aside>

        {/* Canvas */}
        <main className="flex min-w-0 flex-1 border-r border-[#0e0e0e] bg-[#333] pr-[9px] pb-[9px]">
          <div className="flex flex-1 bg-[#212121] pt-[38px] pr-5 pb-[30px] pl-[29px]">
            <div className="flex-1 bg-white" />
          </div>
        </main>

        {/* Studio panels */}
        <aside className="flex w-[188px] shrink-0 flex-col bg-[#383838]">
          <StrokePanel />
          <LayersPanel />
          <TransformPanel />
        </aside>
      </div>

      {/* Status bar */}
      <footer className="h-3 shrink-0 overflow-hidden border-t border-[#161616] bg-[#323232] pl-3.5 leading-[14px] text-[#969696]">
        <b className="text-[#e6e6e6]">Drag</b> to marquee select. <b className="text-[#e6e6e6]">Click</b> an object to select it.{" "}
        <b className="text-[#e6e6e6]">⌘</b> during marquee select to toggle intersection behaviour.
      </footer>
    </div>
  );
}
